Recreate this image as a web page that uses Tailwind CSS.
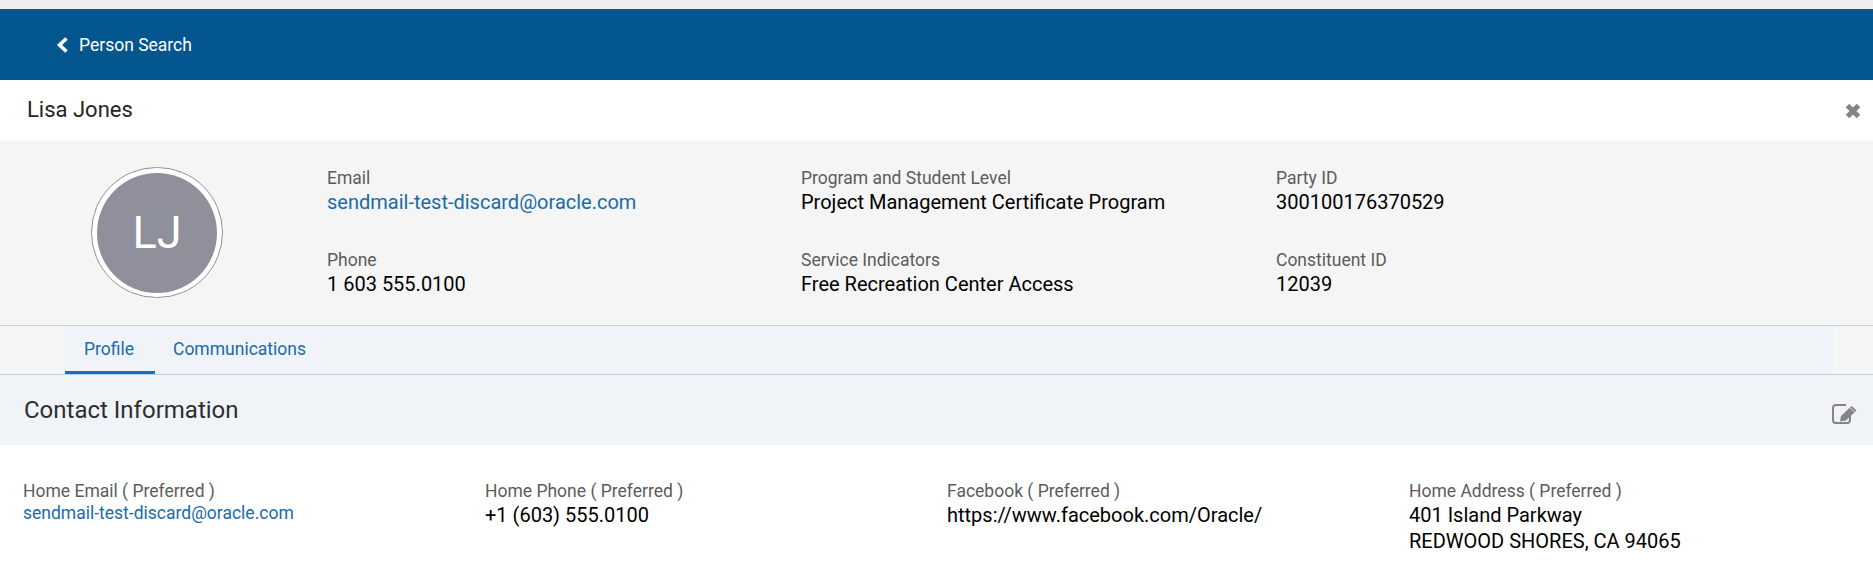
<!DOCTYPE html>
<html lang="en">
<head>
    <meta charset="UTF-8">
    <title>Lisa Jones</title>
    <script src="https://cdn.jsdelivr.net/npm/@tailwindcss/browser@4"></script>
</head>
<body class="bg-white font-['Roboto',sans-serif] overflow-hidden">
    <div class="h-[9px] bg-[#eeeeee]"></div>

    <div class="h-[71px] bg-[#04568f] flex items-center pl-[56px] text-white">
        <svg class="w-[12px] h-[16px] mr-[11px]" viewBox="0 0 12 16" fill="none" stroke="currentColor" stroke-width="3.6"><path d="M10.5 1.5 L3.5 8 L10.5 14.5"/></svg>
        <span class="text-[17.5px] mt-[2px]">Person Search</span>
    </div>

    <div class="h-[61px] flex items-center justify-between pl-[27px] pr-[12px] pb-[2px]">
        <span class="text-[22px] text-[#252525]">Lisa Jones</span>
        <svg class="w-[16px] h-[16px] text-[#858585] mt-[3px]" viewBox="0 0 16 16" fill="none" stroke="currentColor" stroke-width="5"><path d="M2.5 2.5 L13.5 13.5 M13.5 2.5 L2.5 13.5"/></svg>
    </div>

    <div class="h-[184px] bg-[#f5f5f5] flex">
        <div class="w-[327px] pl-[91px] pt-[26px]">
            <div class="w-[132px] h-[131px] rounded-full border border-[#8f909b] bg-white flex items-center justify-center">
                <div class="w-[120px] h-[120px] rounded-full bg-[#8f909b] text-white text-[45px] flex items-center justify-center">LJ</div>
            </div>
        </div>
        <div class="grid grid-cols-[474px_475px_1fr] grid-rows-[82px_82px] pt-[25px] flex-1 text-[17.5px] text-[#5c5c5c] leading-[24px]">
            <div>
                <div>Email</div>
                <div class="text-[20px] leading-[25px] text-[#1a6ba8]">sendmail-test-discard@oracle.com</div>
            </div>
            <div>
                <div>Program and Student Level</div>
                <div class="text-[20px] leading-[25px] text-black">Project Management Certificate Program</div>
            </div>
            <div>
                <div>Party ID</div>
                <div class="text-[20px] leading-[25px] text-black">300100176370529</div>
            </div>
            <div>
                <div>Phone</div>
                <div class="text-[20px] leading-[25px] text-black">1 603 555.0100</div>
            </div>
            <div>
                <div>Service Indicators</div>
                <div class="text-[20px] leading-[25px] text-black">Free Recreation Center Access</div>
            </div>
            <div>
                <div>Constituent ID</div>
                <div class="text-[20px] leading-[25px] text-black">12039</div>
            </div>
        </div>
    </div>

    <div class="h-[50px] bg-[#f5f5f5] border-y border-[#c4ced9] flex pl-[65px] pr-[40px]">
        <div class="flex-1 bg-[#f0f4f9] flex text-[17.5px] text-[#1a6ba8]">
            <div class="w-[90px] flex items-center pl-[19px] pt-[2px] border-b-[3px] border-[#0c72c9]">Profile</div>
            <div class="ml-[18px] flex items-center pb-[1px]">Communications</div>
        </div>
    </div>

    <div class="h-[70px] bg-[#f0f4f9] flex items-center justify-between pl-[24px] pr-[16px]">
        <span class="text-[24px] text-[#2e2e2e]">Contact Information</span>
        <svg class="w-[26px] h-[22px] text-[#858585] mt-[8px]" viewBox="0 0 26 22" fill="none" stroke="currentColor">
            <path d="M15 2 H5 Q2 2 2 5 V17 Q2 20 5 20 H16 Q19 20 19 17 V12" stroke-width="2"/>
            <path d="M9 18.5 L10 13 L20.5 3 L25.5 7.5 L15 17.5 Z" fill="currentColor" stroke="none"/>
            <path d="M18.8 4.6 L23.8 9.1" stroke="#f0f4f9" stroke-width="0.8"/>
        </svg>
    </div>

    <div class="grid grid-cols-[462px_462px_462px_1fr] pl-[23px] pt-[35px] text-[17.5px] text-[#5c5c5c] leading-[22px]">
        <div>
            <div>Home Email ( Preferred )</div>
            <div class="text-[#1a6ba8]">sendmail-test-discard@oracle.com</div>
        </div>
        <div>
            <div>Home Phone ( Preferred )</div>
            <div class="text-[20px] leading-[26px] text-black">+1 (603) 555.0100</div>
        </div>
        <div>
            <div>Facebook ( Preferred )</div>
            <div class="text-[20px] leading-[26px] text-black">https://www.facebook.com/Oracle/</div>
        </div>
        <div>
            <div>Home Address ( Preferred )</div>
            <div class="text-[20px] leading-[26px] text-black">401 Island Parkway</div>
            <div class="text-[20px] leading-[26px] text-black">REDWOOD SHORES, CA 94065</div>
        </div>
    </div>
</body>
</html>
